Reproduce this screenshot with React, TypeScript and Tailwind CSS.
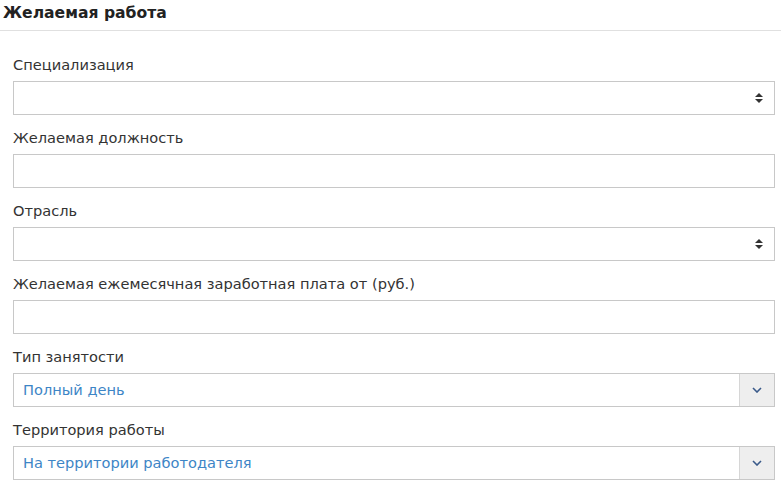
import React from "react";

const UpDown = () => (
  <svg width="8" height="12" viewBox="0 0 8 12" className="block">
    <path d="M0 5 L4 1 L8 5 Z" fill="#333" />
    <path d="M0 7 L4 11 L8 7 Z" fill="#333" />
  </svg>
);

const Chevron = () => (
  <svg width="10" height="6" viewBox="0 0 10 6" className="block">
    <path d="M1 1 L5 5 L9 1" fill="none" stroke="#3a5a8a" strokeWidth="1.6" />
  </svg>
);

const Label = ({ children }: { children: React.ReactNode }) => (
  <div className="text-[14.6px] leading-[20px] text-[#333] mb-[6px]">{children}</div>
);

export default function App() {
  return (
    <div className="w-[781px] h-[486px] bg-white overflow-hidden" style={{ fontFamily: '"DejaVu Sans", Verdana, sans-serif' }}>
      <div className="px-[3px] pt-[3px] h-[31px] border-b border-[#e0e0e0]">
        <div className="text-[15.6px] font-bold leading-[20px] text-[#222]">Желаемая работа</div>
      </div>
      <div className="pl-[13px] pr-[6px] pt-[24px]">
        <div className="mb-[13px]">
          <Label>Специализация</Label>
          <div className="h-[34px] border border-[#c8c8c8] flex items-center justify-end pr-[11px]">
            <UpDown />
          </div>
        </div>
        <div className="mb-[13px]">
          <Label>Желаемая должность</Label>
          <div className="h-[34px] border border-[#c8c8c8]" />
        </div>
        <div className="mb-[13px]">
          <Label>Отрасль</Label>
          <div className="h-[34px] border border-[#c8c8c8] flex items-center justify-end pr-[11px]">
            <UpDown />
          </div>
        </div>
        <div className="mb-[13px]">
          <Label>Желаемая ежемесячная заработная плата от (руб.)</Label>
          <div className="h-[34px] border border-[#c8c8c8]" />
        </div>
        <div className="mb-[13px]">
          <Label>Тип занятости</Label>
          <div className="h-[34px] border border-[#c8c8c8] flex">
            <div className="flex-1 flex items-center pl-[9px] text-[14.6px] text-[#3d85c6]">Полный день</div>
            <div className="w-[35px] bg-[#eeeeee] border-l border-[#d6d6d6] flex items-center justify-center">
              <Chevron />
            </div>
          </div>
        </div>
        <div>
          <Label>Территория работы</Label>
          <div className="h-[34px] border border-[#c8c8c8] flex">
            <div className="flex-1 flex items-center pl-[9px] text-[14.6px] text-[#3d85c6]">На территории работодателя</div>
            <div className="w-[35px] bg-[#eeeeee] border-l border-[#d6d6d6] flex items-center justify-center">
              <Chevron />
            </div>
          </div>
        </div>
      </div>
    </div>
  );
}
